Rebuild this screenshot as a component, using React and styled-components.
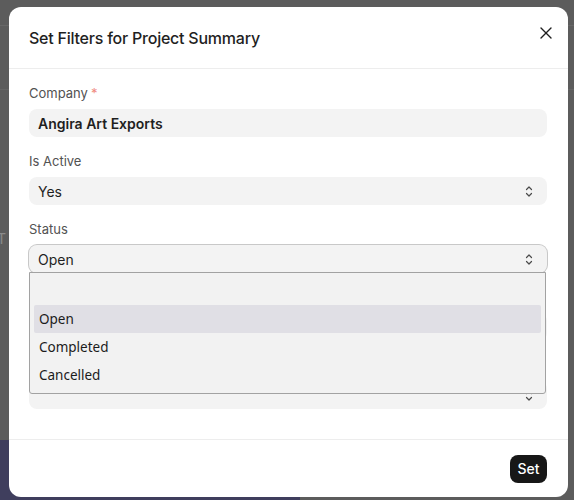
import React from 'react';
import styled, { createGlobalStyle } from 'styled-components';

const GlobalStyle = createGlobalStyle`
  body {
    margin: 0;
    font-family: Inter, 'Liberation Sans', sans-serif;
    -webkit-font-smoothing: antialiased;
  }
`;

const Backdrop = styled.div`
  position: relative;
  box-sizing: border-box;
  width: 574px;
  height: 500px;
  overflow: hidden;
  display: flex;
  padding: 7px 6px 3px 9px;
  background:
    linear-gradient(#3f3e5d, #3f3e5d) 0 440px / 300px 60px no-repeat,
    linear-gradient(#676767, #676767) 0 25px / 100% 1px no-repeat,
    linear-gradient(#656565, #656565) 0 89px / 100% 1px no-repeat,
    #5c5c5c;
`;

const BackdropText = styled.span`
  position: absolute;
  left: -3px;
  top: 230px;
  font-size: 14px;
  color: #8a8a8a;
`;

const Dialog = styled.div`
  flex: 1;
  display: flex;
  flex-direction: column;
  background: #fff;
  border-radius: 12px;
  position: relative;
`;

const Header = styled.div`
  height: 61px;
  display: flex;
  align-items: center;
  justify-content: space-between;
  padding: 0 15px 0 20px;
  border-bottom: 1px solid #ededed;
`;

const Title = styled.h2`
  margin: 0;
  font-size: 16px;
  font-weight: 500;
  color: #1f1f1f;
  letter-spacing: -0.23px;
`;

const CloseButton = styled.button`
  border: none;
  background: none;
  padding: 0;
  margin-top: -9px;
  width: 14px;
  height: 14px;
  display: flex;
  align-items: center;
  justify-content: center;
  color: #1f1f1f;
`;

const Body = styled.div`
  display: flex;
  flex-direction: column;
  gap: 16px;
  padding: 16px 21px 30px 20px;
`;

const Field = styled.div`
  position: relative;
  display: flex;
  flex-direction: column;
  gap: 8px;
`;

const Label = styled.label`
  min-height: 16px;
  font-size: 13px;
  line-height: 16px;
  color: #525252;
`;

const Required = styled.span`
  color: #ef8a80;
  margin-left: 3px;
`;

const Control = styled.div`
  box-sizing: border-box;
  height: 28px;
  display: flex;
  align-items: center;
  justify-content: space-between;
  padding: 0 14px 0 9px;
  border-radius: 8px;
  background: #f3f3f3;
  font-size: 14px;
  font-weight: ${(p) => (p.$bold ? 600 : 400)};
  color: #1f1f1f;
  box-shadow: ${(p) => (p.$focused ? '0 0 0 1px #c8c8c8' : 'none')};
`;

const Dropdown = styled.div`
  position: absolute;
  z-index: 2;
  top: calc(100% - 1px);
  left: 0;
  right: 1px;
  box-sizing: border-box;
  padding: 4px;
  background: #f2f2f2;
  border: 1px solid #a2a2a2;
  border-radius: 0 0 3px 3px;
  font-family: 'Noto Sans', 'Open Sans', sans-serif;
  font-size: 13.5px;
  color: #1b1b1b;
`;

const Option = styled.div`
  height: 28px;
  display: flex;
  align-items: center;
  padding-left: 5px;
  border-radius: 2px;
  background: ${(p) => (p.$active ? '#e0dfe5' : 'transparent')};
`;

const Footer = styled.div`
  height: 57px;
  margin-top: auto;
  display: flex;
  align-items: center;
  justify-content: flex-end;
  padding: 0 21px;
  border-top: 1px solid #ededed;
`;

const Button = styled.button`
  height: 28px;
  padding: 0 7.5px;
  border: none;
  border-radius: 8px;
  background: #171717;
  color: #fff;
  font-family: inherit;
  font-size: 14px;
  font-weight: 500;
`;

function Chevrons() {
  return (
    <svg width='8' height='13' viewBox='0 0 8 13' fill='none' stroke='#4a4a4a' strokeWidth='1.2' strokeLinecap='round' strokeLinejoin='round'>
      <path d='M1.5 4.5 L4 2 L6.5 4.5' />
      <path d='M1.5 8.5 L4 11 L6.5 8.5' />
    </svg>
  );
}

function CloseIcon() {
  return (
    <svg width='12' height='12' viewBox='0 0 12 12' fill='none' stroke='currentColor' strokeWidth='1.4' strokeLinecap='round'>
      <path d='M1 1 L11 11' />
      <path d='M11 1 L1 11' />
    </svg>
  );
}

const statusOptions = ['', 'Open', 'Completed', 'Cancelled'];

export default function App() {
  return (
    <>
      <GlobalStyle />
      <Backdrop>
        <BackdropText>T</BackdropText>
        <Dialog>
          <Header>
            <Title>Set Filters for Project Summary</Title>
            <CloseButton aria-label='close'>
              <CloseIcon />
            </CloseButton>
          </Header>
          <Body>
            <Field>
              <Label>Company<Required>*</Required></Label>
              <Control $bold>Angira Art Exports</Control>
            </Field>
            <Field>
              <Label>Is Active</Label>
              <Control>Yes<Chevrons /></Control>
            </Field>
            <Field>
              <Label>Status</Label>
              <Control $focused>Open<Chevrons /></Control>
              <Dropdown role='listbox'>
                {statusOptions.map((opt) => (
                  <Option key={opt || 'empty'} $active={opt === 'Open'}>{opt}</Option>
                ))}
              </Dropdown>
            </Field>
            <Field>
              <Label />
              <Control><span /><Chevrons /></Control>
            </Field>
            <Field>
              <Label />
              <Control><span /><Chevrons /></Control>
            </Field>
          </Body>
          <Footer>
            <Button>Set</Button>
          </Footer>
        </Dialog>
      </Backdrop>
    </>
  );
}
